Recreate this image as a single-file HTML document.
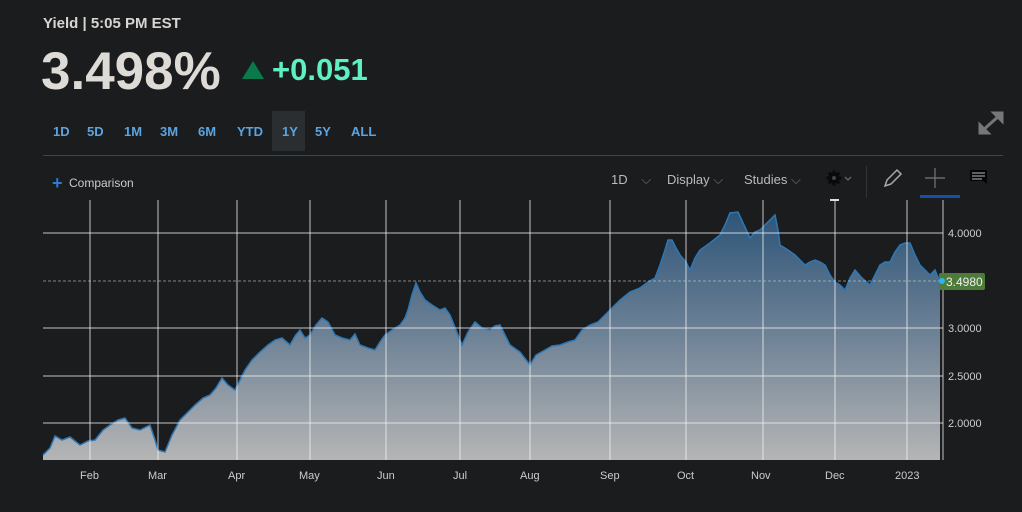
<!DOCTYPE html>
<html><head><style>
body{margin:0;width:1022px;height:512px;background:#1b1c1e;font-family:"Liberation Sans",sans-serif;overflow:hidden;position:relative;color:#ddd}
.a{position:absolute;white-space:nowrap}
.tf{color:#5ba4e0;font-size:13px;font-weight:bold}
</style></head><body>
<div class="a" style="left:43px;top:15px;font-size:15px;font-weight:bold;color:#d8d6d2">Yield | 5:05 PM EST</div>
<div class="a" style="left:41px;top:41px;font-size:53px;font-weight:bold;color:#dedbd6;letter-spacing:0px">3.498%</div>
<svg class="a" style="left:242px;top:61px" width="22" height="18"><polygon points="11,0 22,18 0,18" fill="#0b7a4a"/></svg>
<div class="a" style="left:272px;top:52px;font-size:31px;font-weight:bold;color:#5ef0c2">+0.051</div>
<div class="a" style="left:272px;top:111px;width:33px;height:40px;background:#2b2e30"></div>
<div class="a tf" style="left:53px;top:124px">1D</div>
<div class="a tf" style="left:87px;top:124px">5D</div>
<div class="a tf" style="left:124px;top:124px">1M</div>
<div class="a tf" style="left:160px;top:124px">3M</div>
<div class="a tf" style="left:198px;top:124px">6M</div>
<div class="a tf" style="left:237px;top:124px">YTD</div>
<div class="a tf" style="left:282px;top:124px">1Y</div>
<div class="a tf" style="left:315px;top:124px">5Y</div>
<div class="a tf" style="left:351px;top:124px">ALL</div>
<svg class="a" style="left:978px;top:111px" width="26" height="24"><g stroke="#777" stroke-width="3" fill="#777"><line x1="4" y1="20" x2="22" y2="4"/><polygon points="2,22 2,14 10,22"/><polygon points="24,2 24,10 16,2"/></g></svg>
<div class="a" style="left:43px;top:155px;width:960px;height:1px;background:#444"></div>
<div class="a" style="left:52px;top:173px;font-size:18px;color:#2e7ad6;font-weight:bold">+</div>
<div class="a" style="left:69px;top:176px;font-size:12px;color:#ccc">Comparison</div>
<div class="a" style="left:611px;top:172px;font-size:13px;color:#bbb">1D <span style="margin-left:10px;color:#777">⌵</span></div>
<div class="a" style="left:667px;top:172px;font-size:13px;color:#bbb">Display <span style="color:#777">⌵</span></div>
<div class="a" style="left:744px;top:172px;font-size:13px;color:#bbb">Studies <span style="color:#777">⌵</span></div>
<svg class="a" style="left:826px;top:170px" width="28" height="32"><g fill="#0a0a0a"><circle cx="8" cy="8" r="5.5"/><g stroke="#0a0a0a" stroke-width="3"><line x1="8" y1="0.5" x2="8" y2="15.5"/><line x1="0.5" y1="8" x2="15.5" y2="8"/><line x1="2.7" y1="2.7" x2="13.3" y2="13.3"/><line x1="13.3" y1="2.7" x2="2.7" y2="13.3"/></g></g><circle cx="8" cy="8" r="2" fill="#444"/><path d="M19 7l3 3 3-3" stroke="#777" fill="none"/><rect x="4" y="29" width="9" height="2" fill="#ddd"/></svg>
<div class="a" style="left:866px;top:166px;width:1px;height:32px;background:#333"></div>
<svg class="a" style="left:882px;top:168px" width="22" height="20"><path d="M3 18 L5 12 L15 2 L19 6 L9 16 Z" fill="none" stroke="#aaa" stroke-width="1.5"/></svg>
<svg class="a" style="left:924px;top:167px" width="22" height="22"><path d="M11 1V21M1 11H21" stroke="#777" stroke-width="1.2"/></svg>
<div class="a" style="left:920px;top:195px;width:40px;height:3px;background:#1550a8"></div>
<svg class="a" style="left:970px;top:169px" width="18" height="16"><rect x="0" y="1" width="17" height="11" fill="#050505"/><g stroke="#bbb"><line x1="2" y1="4" x2="15" y2="4"/><line x1="2" y1="7" x2="15" y2="7"/><line x1="2" y1="10" x2="12" y2="10"/></g><polygon points="13,12 17,12 17,15" fill="#050505"/></svg>
<svg class="a" style="left:0;top:0" width="1022" height="512">
<defs><linearGradient id="g" x1="0" y1="210" x2="0" y2="460" gradientUnits="userSpaceOnUse"><stop offset="0" stop-color="#2c5478"/><stop offset="0.5" stop-color="#6e8296"/><stop offset="1" stop-color="#b5b5b5"/></linearGradient></defs>
<polygon fill="url(#g)" points="43,460 43,455 50,448 55,436 62,440 70,437 80,445 88,441 95,440 103,430 110,425 118,420 125,418 132,428 140,430 150,425 155,440 158,450 165,452 172,435 180,420 188,412 195,405 203,398 210,395 216,388 222,378 228,385 235,390 240,380 245,370 252,360 260,352 268,345 275,340 282,338 290,345 295,336 300,330 305,338 310,335 316,325 322,318 328,322 335,335 342,338 350,340 355,334 360,345 368,348 375,350 380,342 385,335 392,330 400,325 405,318 408,310 412,295 416,283 420,292 425,300 432,305 440,310 445,308 450,315 456,330 462,345 468,332 475,322 482,328 490,330 495,326 500,325 505,335 510,345 520,352 530,365 536,355 545,350 552,346 560,345 568,342 575,340 582,330 590,325 598,322 605,315 612,308 620,300 630,292 640,288 648,282 655,278 660,265 665,250 668,240 672,240 676,248 680,255 686,262 690,270 695,258 700,250 710,243 720,235 725,225 730,213 738,212 744,225 750,238 755,232 760,230 768,222 775,215 778,230 780,245 788,250 795,255 800,260 805,265 810,262 815,260 820,262 825,265 830,275 835,282 840,285 845,290 850,278 855,270 862,278 870,285 875,275 880,265 885,262 890,262 895,252 900,245 905,243 910,243 915,255 920,265 925,270 930,275 935,270 940,282 940,460"/>
<polyline fill="none" stroke="#2c78b6" stroke-width="1.5" points="43,455 50,448 55,436 62,440 70,437 80,445 88,441 95,440 103,430 110,425 118,420 125,418 132,428 140,430 150,425 155,440 158,450 165,452 172,435 180,420 188,412 195,405 203,398 210,395 216,388 222,378 228,385 235,390 240,380 245,370 252,360 260,352 268,345 275,340 282,338 290,345 295,336 300,330 305,338 310,335 316,325 322,318 328,322 335,335 342,338 350,340 355,334 360,345 368,348 375,350 380,342 385,335 392,330 400,325 405,318 408,310 412,295 416,283 420,292 425,300 432,305 440,310 445,308 450,315 456,330 462,345 468,332 475,322 482,328 490,330 495,326 500,325 505,335 510,345 520,352 530,365 536,355 545,350 552,346 560,345 568,342 575,340 582,330 590,325 598,322 605,315 612,308 620,300 630,292 640,288 648,282 655,278 660,265 665,250 668,240 672,240 676,248 680,255 686,262 690,270 695,258 700,250 710,243 720,235 725,225 730,213 738,212 744,225 750,238 755,232 760,230 768,222 775,215 778,230 780,245 788,250 795,255 800,260 805,265 810,262 815,260 820,262 825,265 830,275 835,282 840,285 845,290 850,278 855,270 862,278 870,285 875,275 880,265 885,262 890,262 895,252 900,245 905,243 910,243 915,255 920,265 925,270 930,275 935,270 940,282"/>
<g stroke="#f0f0f0" stroke-opacity="0.8" stroke-width="1">
<line x1="43" y1="233" x2="943" y2="233"/><line x1="43" y1="328" x2="943" y2="328"/><line x1="43" y1="376" x2="943" y2="376"/><line x1="43" y1="423" x2="943" y2="423"/>
<line x1="90" y1="200" x2="90" y2="460"/><line x1="158" y1="200" x2="158" y2="460"/><line x1="237" y1="200" x2="237" y2="460"/><line x1="310" y1="200" x2="310" y2="460"/><line x1="386" y1="200" x2="386" y2="460"/><line x1="460" y1="200" x2="460" y2="460"/><line x1="530" y1="200" x2="530" y2="460"/><line x1="610" y1="200" x2="610" y2="460"/><line x1="686" y1="200" x2="686" y2="460"/><line x1="763" y1="200" x2="763" y2="460"/><line x1="835" y1="200" x2="835" y2="460"/><line x1="907" y1="200" x2="907" y2="460"/><line x1="943" y1="200" x2="943" y2="460"/>
</g>
<line x1="43" y1="281" x2="943" y2="281" stroke="#ccc" stroke-opacity="0.6" stroke-dasharray="3,2"/>
<rect x="939" y="273" width="46" height="17" rx="2" fill="#4e7a3a"/>
<circle cx="942" cy="281" r="3" fill="#2ab4f0"/>
<text x="946" y="286" font-size="12" fill="#eee" font-family="Liberation Sans">3.4980</text>
<g font-size="11" fill="#ccc" font-family="Liberation Sans">
<text x="948" y="237">4.0000</text><text x="948" y="332">3.0000</text><text x="948" y="380">2.5000</text><text x="948" y="427">2.0000</text>
<text x="80" y="479">Feb</text><text x="148" y="479">Mar</text><text x="228" y="479">Apr</text><text x="299" y="479">May</text><text x="377" y="479">Jun</text><text x="453" y="479">Jul</text><text x="520" y="479">Aug</text><text x="600" y="479">Sep</text><text x="677" y="479">Oct</text><text x="751" y="479">Nov</text><text x="825" y="479">Dec</text><text x="895" y="479">2023</text>
</g>
</svg>
</body></html>
